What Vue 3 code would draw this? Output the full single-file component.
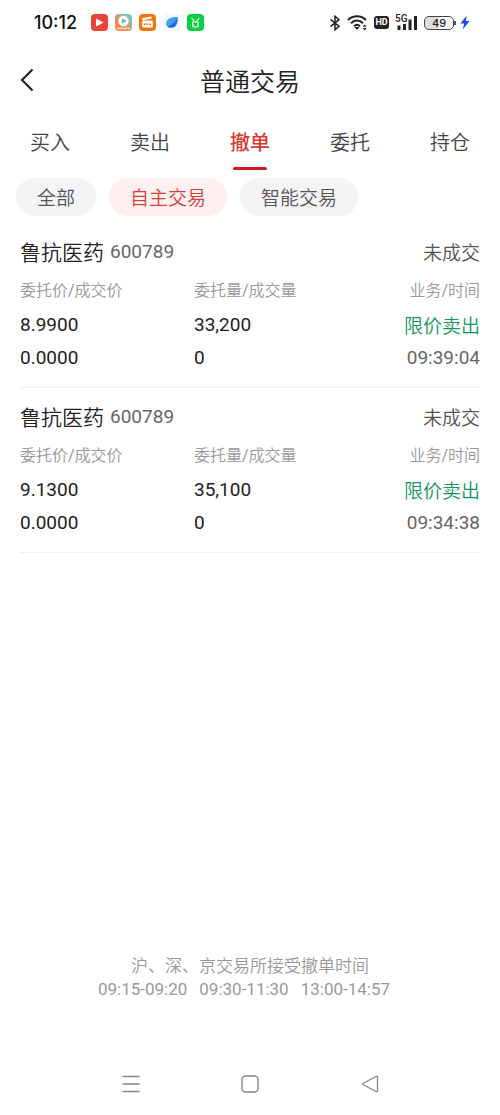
<template>
  <div class="page">
    <div class="status-bar">
      <span class="clock">10:12</span>
      <div class="status-apps">
        <svg width="17" height="17" viewBox="0 0 17 17">
          <rect width="17" height="17" rx="4" fill="#e8443a" />
          <path d="M5 4.4v8.2l7.6-4.1z" fill="#fff" />
        </svg>
        <svg width="17" height="17" viewBox="0 0 17 17">
          <defs>
            <linearGradient id="play" x1="0" y1="1" x2="1" y2="0">
              <stop offset="0.35" stop-color="#ee8a52" />
              <stop offset="0.8" stop-color="#74c9bd" />
            </linearGradient>
          </defs>
          <rect width="17" height="17" rx="4" fill="url(#play)" />
          <circle cx="8.5" cy="7" r="5.2" fill="#fff" />
          <path d="M6.8 4.2v5.6L11.6 7z" fill="#5dbdb2" />
          <path d="M2.5 14.4h12" stroke="#fbe3d2" stroke-width="1.6" stroke-dasharray="2 0.6" />
        </svg>
        <svg width="17" height="17" viewBox="0 0 17 17">
          <rect width="17" height="17" rx="4" fill="#f2760f" />
          <path d="M3.5 5.3l9-1.8" stroke="#fff" stroke-width="2" />
          <rect x="3.2" y="6.6" width="10.6" height="7" rx="1.2" fill="#fff" />
          <path d="M4.8 10.2h7.4" stroke="#f2760f" stroke-width="1.6" stroke-dasharray="1.8 0.8" />
        </svg>
        <svg width="17" height="17" viewBox="0 0 17 17">
          <rect width="17" height="17" rx="4" fill="#f3f8fd" />
          <path d="M14.6 3C8 2.6 3.2 5.2 3.2 9.5c0 1 .2 1.7.7 2.4C9 11.5 13.5 9 14.6 3z" fill="#3d9df2" />
          <path d="M14.6 3c.6 6.5-1.6 10.8-6.2 10.8-2 0-3.5-.7-4.5-1.9C9 11.5 12.5 8.5 14.6 3z" fill="#1c68d4" />
        </svg>
        <svg width="17" height="17" viewBox="0 0 17 17">
          <rect width="17" height="17" rx="4" fill="#08cf45" />
          <path d="M4.6 3.8l2.6 3M12.4 3.8l-2.6 3" stroke="#d8ffe2" stroke-width="1.2" fill="none" />
          <rect x="5" y="7" width="7" height="6.6" rx="1.6" fill="#b9f7ca" />
          <path d="M6.8 8.6l3.4 3.6M10.2 8.6l-3.4 3.6" stroke="#08a437" stroke-width="1.2" />
        </svg>
      </div>
      <div class="status-icons">
        <svg width="12" height="16" viewBox="0 0 12 16" fill="none" stroke="#222" stroke-width="1.5">
          <path d="M1.5 4.3l8.5 7-4 3.500V1.200l4 3.500-8.500 7" />
        </svg>
        <svg width="21" height="17" viewBox="0 0 21 17" fill="none" stroke="#222" stroke-width="2">
          <path d="M1 6c5-5 13-5 18 0M4 9.200c3.600-3.600 8.400-3.600 12 0M7 12.200c1.800-1.800 4.200-1.800 6 0" />
          <path d="M7.500 13h5L10 16z" fill="#222" stroke="none" />
          <path d="M15.700 12.800l2-2.400 2 2.400zM15.700 14l2 2.400 2-2.400z" fill="#222" stroke="none" />
        </svg>
        <span class="hd">HD</span>
        <svg width="23" height="18" viewBox="0 0 23 18">
          <text x="0" y="8" font-size="10" font-weight="500" fill="#222">5G</text>
          <path d="M4 11.500V16M9.500 10V16M15 5.500V16M20.500 2V16" stroke="#222" stroke-width="3" />
        </svg>
        <div class="battery">
          <span class="battery-level">49</span>
        </div>
        <svg width="10" height="15" viewBox="0 0 10 15">
          <path d="M6.600.5L.5 8.500h3.600L2.800 14.500 9.500 6H5.800z" fill="#2446e8" />
        </svg>
      </div>
    </div>

    <header class="header">
      <button class="back" aria-label="返回">
        <svg width="14" height="24" viewBox="0 0 14 24" fill="none" stroke="#1a1a1a" stroke-width="2">
          <path d="M12.500 1.500L2 12l10.500 10.500" />
        </svg>
      </button>
      <h1>普通交易</h1>
    </header>

    <nav class="tabs">
      <button
        v-for="tab in tabs"
        :key="tab"
        class="tab"
        :class="{ active: tab === activeTab }"
        @click="activeTab = tab">
        {{ tab }}
      </button>
    </nav>

    <div class="filters">
      <button
        v-for="filter in filters"
        :key="filter"
        class="filter"
        :class="{ active: filter === activeFilter }"
        @click="activeFilter = filter">
        {{ filter }}
      </button>
    </div>

    <ul class="orders">
      <li v-for="order in orders" :key="order.id" class="order">
        <div class="order-head">
          <span class="order-name">{{ order.name }}</span>
          <span class="order-code">{{ order.code }}</span>
          <span class="order-status">{{ order.status }}</span>
        </div>
        <div class="order-grid">
          <span class="label">委托价/成交价</span>
          <span class="label">委托量/成交量</span>
          <span class="label">业务/时间</span>
          <span>{{ order.price }}</span>
          <span>{{ order.amount }}</span>
          <span class="sell">{{ order.type }}</span>
          <span>{{ order.dealPrice }}</span>
          <span>{{ order.dealAmount }}</span>
          <span class="time">{{ order.time }}</span>
        </div>
      </li>
    </ul>

    <footer class="notice">
      <p>沪、深、京交易所接受撤单时间</p>
      <p class="hours">
        <span v-for="range in hours" :key="range">{{ range }}</span>
      </p>
    </footer>

    <div class="system-nav">
      <button aria-label="菜单">
        <svg width="18" height="18" viewBox="0 0 18 18" fill="none" stroke="#858585" stroke-width="1.4">
          <path d="M0.500 1.500h17M0.500 9h17M0.500 16.500h17" />
        </svg>
      </button>
      <button aria-label="主页">
        <svg width="18" height="18" viewBox="0 0 18 18" fill="none" stroke="#858585" stroke-width="1.4">
          <rect x="1" y="1" width="16" height="16" rx="3.5" />
        </svg>
      </button>
      <button aria-label="后退">
        <svg width="18" height="18" viewBox="0 0 18 18" fill="none" stroke="#858585" stroke-width="1.3">
          <path d="M15 1.500L2.300 8.200q-1.300.8 0 1.600L15 16.500q1.500.6 1.500-.9V2.400q0-1.500-1.500-.9z" />
        </svg>
      </button>
    </div>
  </div>
</template>

<script setup>
import { ref } from 'vue';

const tabs = ['买入', '卖出', '撤单', '委托', '持仓'];
const activeTab = ref('撤单');

const filters = ['全部', '自主交易', '智能交易'];
const activeFilter = ref('自主交易');

const orders = ref([
  { id: 1, name: '鲁抗医药', code: '600789', status: '未成交', price: '8.9900', dealPrice: '0.0000', amount: '33,200', dealAmount: '0', type: '限价卖出', time: '09:39:04' },
  { id: 2, name: '鲁抗医药', code: '600789', status: '未成交', price: '9.1300', dealPrice: '0.0000', amount: '35,100', dealAmount: '0', type: '限价卖出', time: '09:34:38' }
]);

const hours = ['09:15-09:20', '09:30-11:30', '13:00-14:57'];
</script>

<style>
body {
  margin: 0;
  background-color: #fff;
}
</style>

<style scoped>
.page {
  display: flex;
  flex-direction: column;
  min-height: 100vh;
  color: #222;
  font-family: Roboto, "Noto Sans CJK SC DemiLight", "Noto Sans CJK SC", sans-serif;
}

button {
  padding: 0;
  border: none;
  background: none;
  color: inherit;
  font-family: inherit;
  cursor: pointer;
}

svg {
  display: block;
}

.status-bar {
  display: flex;
  align-items: center;
  height: 45px;
  padding: 0 30px 0 34px;
}

.clock {
  width: 44px;
  color: #111;
  font-family: Inter, sans-serif;
  font-size: 18px;
  font-weight: 500;
}

.status-apps {
  display: flex;
  gap: 7px;
  margin-left: 13px;
}

.status-icons {
  display: flex;
  align-items: center;
  gap: 6px;
  margin-left: auto;
}

.hd {
  width: 15px;
  border-radius: 3px;
  background-color: #222;
  color: #fff;
  font-size: 9px;
  font-weight: 700;
  line-height: 13px;
  text-align: center;
}

.battery {
  position: relative;
  width: 28px;
  height: 12px;
  border: 1px solid #444;
  border-radius: 5px;
  background: linear-gradient(to right, #ddd 49%, #fff 49%);
  text-align: center;
}

.battery::after {
  content: "";
  position: absolute;
  top: 4px;
  right: -3px;
  width: 2px;
  height: 4px;
  background-color: #555;
}

.battery-level {
  display: block;
  font-family: Inter, sans-serif;
  font-size: 11px;
  font-weight: 500;
  line-height: 12px;
}

.header {
  display: grid;
  grid-template-columns: 40px 1fr 40px;
  align-items: center;
  height: 70px;
  padding: 0 20px;
}

h1 {
  margin: 0;
  font-size: 25px;
  font-weight: 400;
  text-align: center;
}

.tabs {
  display: grid;
  grid-template-columns: repeat(5, 1fr);
}

.tab {
  position: relative;
  height: 55px;
  padding-bottom: 2px;
  color: #444;
  font-size: 20px;
}

.tab.active {
  color: #d93a32;
  font-family: "Noto Sans CJK SC", sans-serif;
  font-weight: 500;
}

.tab.active::after {
  content: "";
  position: absolute;
  bottom: 0;
  left: 50%;
  width: 34px;
  height: 3px;
  border-radius: 2px;
  background-color: #d01c1f;
  transform: translateX(-50%);
}

.filters {
  display: flex;
  gap: 13px;
  padding: 8px 16px 0;
}

.filter {
  height: 38px;
  padding: 0 21px 2px;
  border-radius: 19px;
  background-color: #f4f4f6;
  color: #555;
  font-size: 19px;
}

.filter.active {
  background-color: #fdf0ef;
  color: #d0433c;
}

.orders {
  margin: 0;
  padding: 7px 20px 0;
  list-style: none;
}

.order {
  padding: 9px 0 13px;
  border-bottom: 1px solid #f1f1f1;
}

.order-head {
  display: flex;
  align-items: center;
  gap: 6px;
  height: 38px;
  color: #666;
  font-size: 19px;
}

.order-name {
  color: #222;
  font-size: 21px;
}

.order-status {
  margin-left: auto;
  color: #555;
}

.order-grid {
  display: grid;
  grid-template-columns: 174fr 150fr 136fr;
  grid-template-rows: 38px 33px 33px;
  align-items: center;
  font-size: 19px;
}

.order-grid span:nth-child(3n) {
  text-align: right;
}

.label {
  color: #999;
  font-size: 16px;
}

.sell {
  color: #13965f;
}

.time {
  color: #666;
}

.notice {
  margin-top: auto;
  padding: 24px 20px 52px;
  color: #999;
  font-size: 17px;
  line-height: 23px;
  text-align: center;
}

.notice p {
  margin: 0;
}

.notice .hours {
  display: flex;
  justify-content: center;
  gap: 12px;
  padding-right: 12px;
}

.system-nav {
  display: flex;
  justify-content: space-between;
  align-items: center;
  width: 51.4%;
  height: 62px;
  margin: 0 auto;
}
</style>
